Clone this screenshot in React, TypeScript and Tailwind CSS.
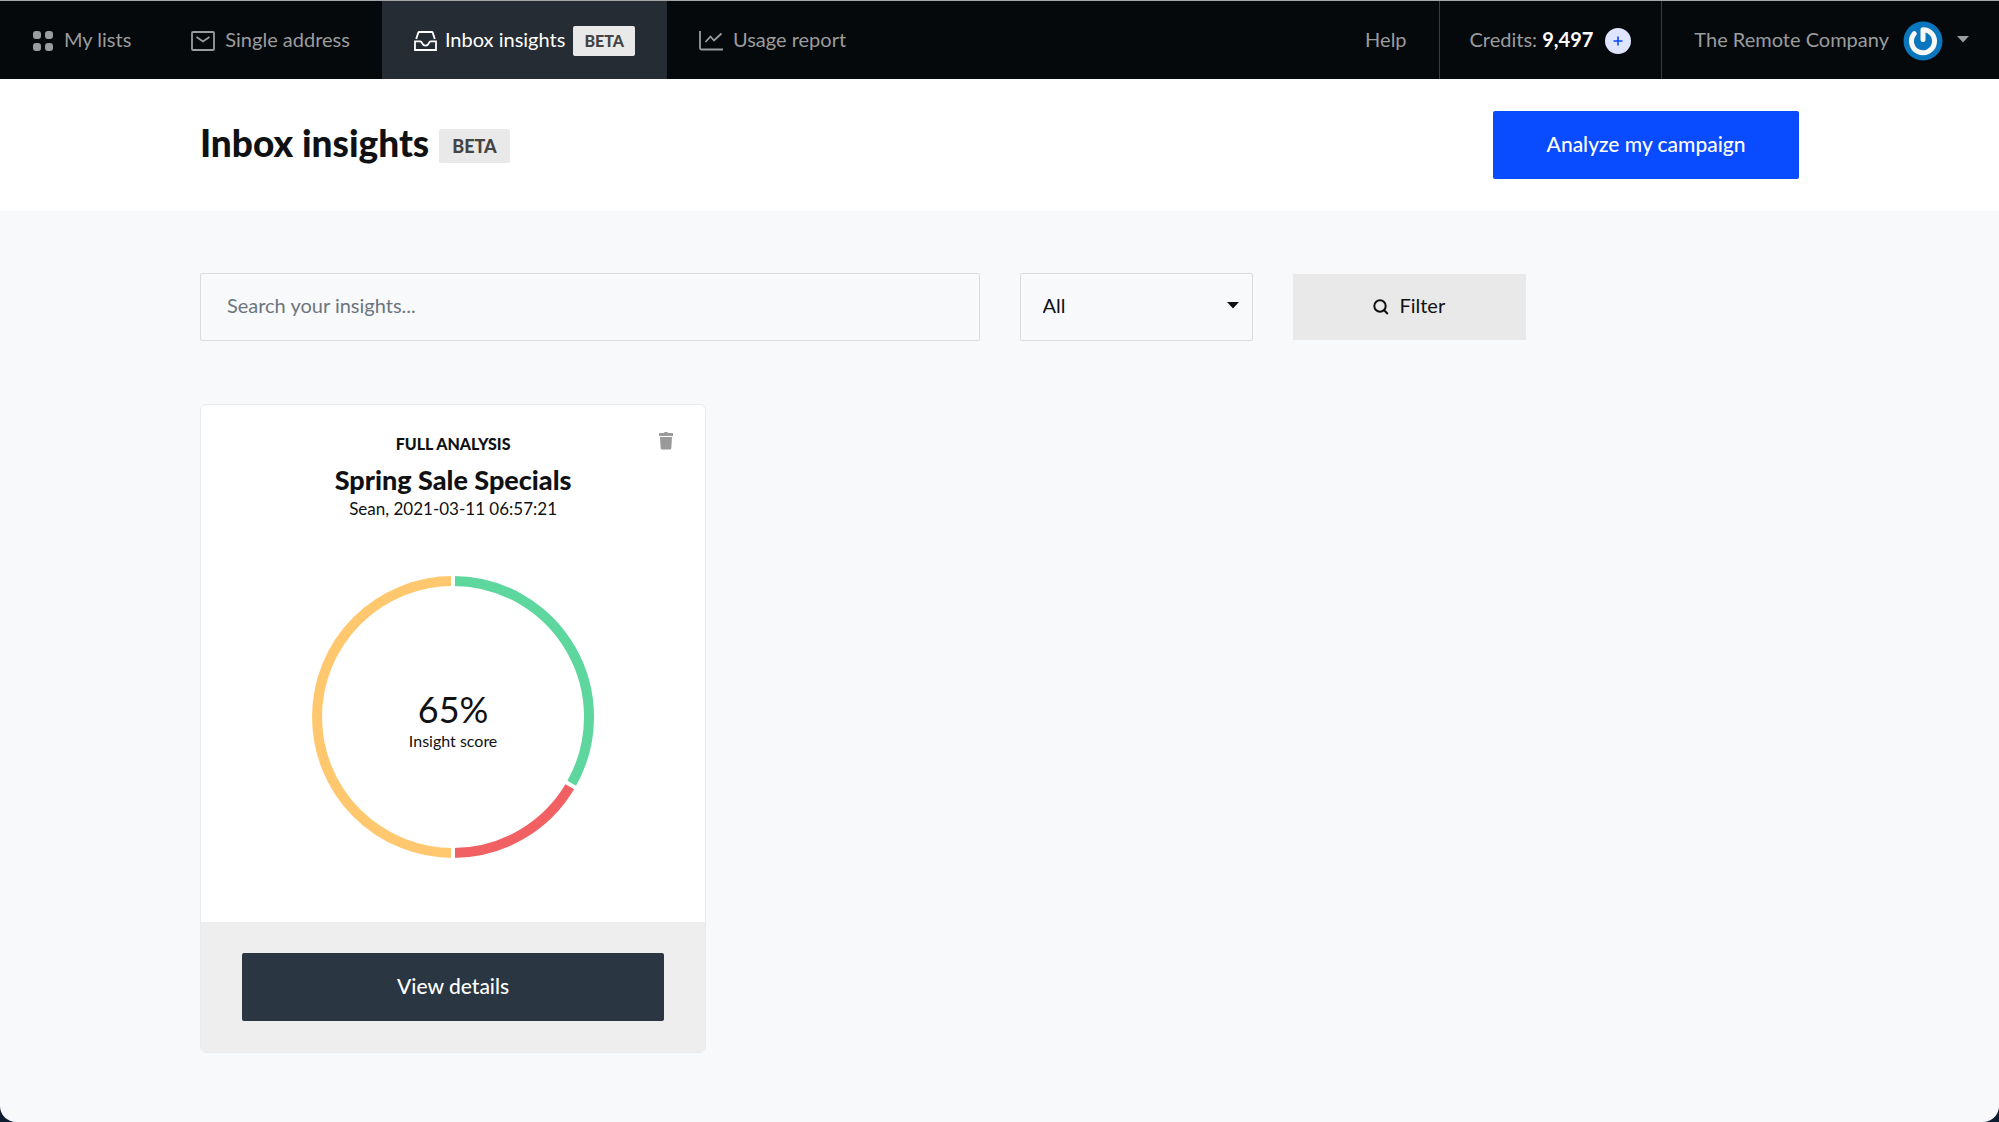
import React from "react";

function DotsIcon() {
  return (
    <svg width="22" height="20" viewBox="0 0 22 20" fill="currentColor" aria-hidden="true">
      <rect x="1" y="0" width="8" height="8" rx="3" />
      <rect x="13" y="0" width="8" height="8" rx="3" />
      <rect x="1" y="12" width="8" height="8" rx="3" />
      <rect x="13" y="12" width="8" height="8" rx="3" />
    </svg>
  );
}

function MailIcon() {
  return (
    <svg width="24" height="20" viewBox="0 0 24 20" fill="none" stroke="currentColor" strokeWidth="1.8" aria-hidden="true">
      <rect x="1" y="1" width="22" height="18" rx="1" />
      <path d="M5.5 6 12 10.5 18.5 6" />
    </svg>
  );
}

function InboxIcon() {
  return (
    <svg width="23" height="20" viewBox="0 0 23 20" fill="none" stroke="currentColor" strokeWidth="1.8" aria-hidden="true">
      <path d="M2.2 8 4.3 1.6Q4.5 1 5.2 1h12.6q.7 0 .9.6L20.8 8" />
      <path d="M1 10.4h5.2c1.2 0 1.5.8 2 1.9.6 1.3 1.6 2.3 3.3 2.3s2.700-1 3.300-2.300c.5-1.100.8-1.900 2-1.900H22V19H1z" />
    </svg>
  );
}

function ChartIcon() {
  return (
    <svg width="24" height="20" viewBox="0 0 24 20" fill="none" stroke="currentColor" strokeWidth="1.8" aria-hidden="true">
      <path d="M1 0v17q0 1.500 1.500 1.500H24" />
      <path d="M6.500 11 11.500 5.500 15 9.500 22.500 2.500" />
    </svg>
  );
}

function SearchIcon() {
  return (
    <svg width="16" height="16" viewBox="0 0 16 16" fill="none" stroke="currentColor" strokeWidth="2" aria-hidden="true" className="mt-1">
      <circle cx="7" cy="7" r="5.700" />
      <path d="m10.500 10.500 4.300 4.500" />
    </svg>
  );
}

function TrashIcon() {
  return (
    <svg width="14" height="18" viewBox="0 0 14 18" fill="currentColor" aria-hidden="true">
      <path d="M0 1.500Q0 1 .5 1H4.500L5.200.4Q5.500 0 6 0H8Q8.500 0 8.800.4L9.500 1h4q.5 0 .5.500V4H0z" />
      <path d="M1 5h12l-.7 11q-.1 1.500-1.600 1.500H3.300Q1.800 17.500 1.700 16z" />
    </svg>
  );
}

function Caret() {
  return (
    <svg width="12" height="7" viewBox="0 0 12 7" fill="currentColor" aria-hidden="true" className="-mt-1">
      <path d="M0 0h12L6 6.500z" />
    </svg>
  );
}

function Avatar() {
  return (
    <svg width="40" height="40" viewBox="0 0 40 40" fill="none" aria-hidden="true">
      <circle cx="20" cy="20" r="19.500" fill="#0a76bd" />
      <path
        d="M20 18.500V8.700A11.500 11.500 0 1 1 11.300 12.700"
        stroke="#f8f8f8"
        strokeWidth="5"
        strokeLinecap="round"
        strokeLinejoin="round"
      />
    </svg>
  );
}

function Donut() {
  return (
    <svg viewBox="0 0 282 282" className="col-start-1 row-start-1 size-full" fill="none" strokeWidth="10" role="img" aria-label="Insight score 65%">
      <path d="M141 5A136 136 0 0 1 258.780 209" stroke="#5dd79d" />
      <path d="M258.780 209A136 136 0 0 1 141 277" stroke="#f16163" />
      <path d="M141 277A136 136 0 0 1 141 5" stroke="#ffc86f" />
      <path d="M141 141V-2M141 141V284M141 141 264.840 212.500" stroke="#fff" strokeWidth="4" />
    </svg>
  );
}

type NavItemProps = {
  icon: React.ReactNode;
  label: string;
  active?: boolean;
  children?: React.ReactNode;
};

function NavItem({ icon, label, active, children }: NavItemProps) {
  return (
    <a
      href="#"
      aria-current={active ? "page" : undefined}
      className={
        active
          ? "flex items-center gap-2 bg-[#252c33] px-8 pt-0.5 text-white"
          : "flex items-center gap-2.5 px-8 pt-0.5 text-[#9b9c9d] first:pr-7"
      }
    >
      {icon}
      <span className="-mt-1">{label}</span>
      {children}
    </a>
  );
}

export default function App() {
  return (
    <div className="min-h-screen bg-[#101c30] font-['Lato',sans-serif] text-[#0f1113]">
      <div className="min-h-screen overflow-hidden rounded-b-2xl bg-[#f8f9fb]">
        <nav className="flex h-[79px] items-stretch justify-between border-t border-[#a5a6a7] bg-[#05090c] text-xl whitespace-nowrap">
          <div className="flex">
            <NavItem icon={<DotsIcon />} label="My lists" />
            <NavItem icon={<MailIcon />} label="Single address" />
            <NavItem icon={<InboxIcon />} label="Inbox insights" active>
              <span className="rounded-xs bg-[#e9e9e9] px-[11px] text-base leading-[30px] font-black text-[#444]">BETA</span>
            </NavItem>
            <NavItem icon={<ChartIcon />} label="Usage report" />
          </div>
          <div className="flex text-[#9b9c9d]">
            <a href="#" className="flex items-center px-8 pb-0.5">Help</a>
            <div className="flex items-center gap-3 border-l border-[#3a3d3f] px-[30px] pt-0.5">
              <span className="-mt-1">
                Credits: <b className="font-bold text-white">9,497</b>
              </span>
              <button type="button" aria-label="Add credits" className="flex size-[26px] items-center justify-center rounded-full bg-[#dfe5ff] text-[#0a4bff]">
                <svg width="10" height="10" viewBox="0 0 10 10" stroke="currentColor" strokeWidth="1.600" aria-hidden="true">
                  <path d="M5 .5v9M.5 5h9" />
                </svg>
              </button>
            </div>
            <button type="button" className="flex items-center gap-3.5 border-l border-[#3a3d3f] pt-0.5 pr-[30px] pl-8">
              <span className="-mt-1">The Remote Company</span>
              <Avatar />
              <Caret />
            </button>
          </div>
        </nav>

        <header className="bg-white py-8">
          <div className="mx-auto flex w-4/5 items-center justify-between">
            <div className="flex items-center gap-2.5 pb-1">
              <h1 className="text-[37px] leading-10 font-black">Inbox insights</h1>
              <span className="mt-1.5 rounded-xs bg-[#e9e9e9] px-[13px] text-lg leading-[34px] font-black text-[#444]">BETA</span>
            </div>
            <button type="button" className="h-[68px] min-w-[306px] rounded-xs bg-[#094bff] px-8 pb-0.5 text-[21px] font-medium text-white">
              Analyze my campaign
            </button>
          </div>
        </header>

        <main className="mx-auto w-4/5 pt-[62px] pb-16">
          <form className="grid grid-cols-12 items-center gap-10" onSubmit={(e) => e.preventDefault()}>
            <input
              type="text"
              aria-label="Search your insights"
              placeholder="Search your insights..."
              className="col-span-6 h-[68px] rounded-xs border border-[#dadcde] bg-transparent px-[26px] pb-1 text-xl placeholder:text-[#6c757d]"
            />
            <div className="col-span-2 grid items-center">
              <select aria-label="Insight type" className="col-start-1 row-start-1 h-[68px] w-full appearance-none rounded-xs border border-[#dadcde] bg-transparent px-[22px] pb-1 text-xl">
                <option>All</option>
              </select>
              <span className="pointer-events-none col-start-1 row-start-1 mr-3.5 justify-self-end">
                <Caret />
              </span>
            </div>
            <button type="submit" className="col-span-2 flex h-[66px] items-center justify-center gap-2.5 bg-[#e9e9e9] pb-1 text-xl">
              <SearchIcon />
              Filter
            </button>
          </form>

          <section className="mt-[63px] grid grid-cols-12 gap-10">
            <article className="col-span-4 overflow-hidden rounded-md border border-[#e9eaec] bg-white text-center">
              <div className="relative pt-[27px] pb-16">
                <button type="button" aria-label="Delete insight" className="absolute top-[27px] right-8 text-[#999]">
                  <TrashIcon />
                </button>
                <p className="text-base leading-6 font-black">FULL ANALYSIS</p>
                <h2 className="mt-1.5 text-[27px] leading-9 font-black">Spring Sale Specials</h2>
                <p className="text-[17px] leading-[22px]">Sean, 2021-03-11 06:57:21</p>
                <div className="mx-auto mt-14 grid size-[282px] place-items-center">
                  <Donut />
                  <div className="col-start-1 row-start-1 pt-2">
                    <p className="text-4xl leading-10">65%</p>
                    <p className="text-base leading-6">Insight score</p>
                  </div>
                </div>
              </div>
              <div className="bg-[#eee] px-[41px] py-[31px]">
                <button type="button" className="h-[68px] w-full rounded-xs bg-[#2a3642] pb-0.5 text-[21px] font-medium text-white">
                  View details
                </button>
              </div>
            </article>
          </section>
        </main>
      </div>
    </div>
  );
}
